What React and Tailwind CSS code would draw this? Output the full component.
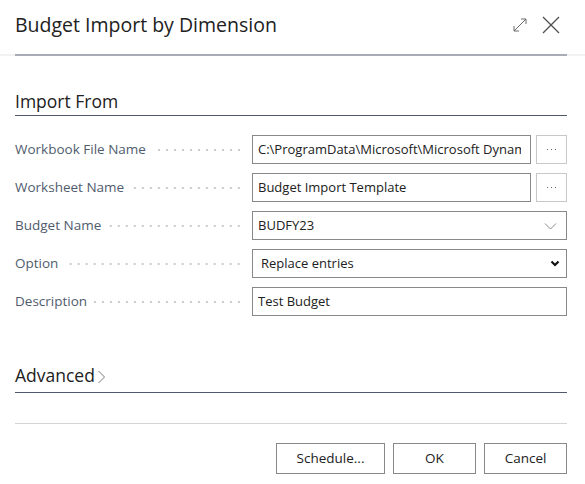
import React from 'react';

const font = { fontFamily: '"Open Sans", "Noto Sans", sans-serif' };

function ExpandIcon() {
  return (
    <svg width="16" height="16" viewBox="0 0 16 16" fill="none" stroke="#6b6b6b" strokeWidth="1">
      <path d="M2 14 14 2" />
      <path d="M9 2h5v5" />
      <path d="M2 9v5h5" />
    </svg>
  );
}

function CloseIcon() {
  return (
    <svg width="18" height="18" viewBox="0 0 18 18" fill="none" stroke="#505050" strokeWidth="1.3">
      <path d="M1 1 17 17M17 1 1 17" />
    </svg>
  );
}

function ThinChevron() {
  return (
    <svg width="13" height="8" viewBox="0 0 13 8" fill="none" stroke="#8a8a8a" strokeWidth="1">
      <path d="M1 1.5 6.5 7 12 1.5" />
    </svg>
  );
}

function BoldChevron() {
  return (
    <svg width="10" height="7" viewBox="0 0 10 7" fill="none" stroke="#111" strokeWidth="2.2">
      <path d="M1.5 1.5 5 5 8.5 1.5" />
    </svg>
  );
}

function Dots() {
  return (
    <span className="flex items-center gap-[2.5px]">
      <span className="h-[1.5px] w-[1.5px] rounded-full bg-[#333]" />
      <span className="h-[1.5px] w-[1.5px] rounded-full bg-[#333]" />
      <span className="h-[1.5px] w-[1.5px] rounded-full bg-[#333]" />
    </span>
  );
}

function Field({ label, children }) {
  return (
    <div className="flex h-[29px] items-center">
      <div className="flex h-full w-[228px] shrink-0 items-center">
        <span className="whitespace-nowrap text-[13.5px] text-[#505c6d]">{label}</span>
        <span className="ml-[6px] h-[2px] flex-1 self-center bg-[radial-gradient(circle,#c6cad1_0.8px,transparent_1px)] bg-[length:8px_2px] bg-right" />
      </div>
      <div className="ml-[9px] flex h-full min-w-0 flex-1 items-center gap-[5px]">{children}</div>
    </div>
  );
}

function Box({ children, right }) {
  return (
    <div className="flex h-full min-w-0 flex-1 items-center border border-[#8a8886] bg-white pl-[5px] pr-[9px]">
      <span className="min-w-0 flex-1 overflow-hidden whitespace-nowrap text-[13px] text-[#212121]">{children}</span>
      {right}
    </div>
  );
}

function EllipsisButton() {
  return (
    <div className="flex h-full w-[31px] shrink-0 items-center justify-center border border-[#c8c8c8]">
      <Dots />
    </div>
  );
}

function Button({ children, w }) {
  return (
    <button
      type="button"
      className={`flex h-[31px] ${w} items-center justify-center border border-[#8a8886] bg-white text-[13.5px] text-[#212121]`}
    >
      {children}
    </button>
  );
}

export default function App() {
  return (
    <div className="h-[484px] w-[585px] overflow-hidden bg-white" style={font}>
      <header className="flex h-[54px] items-start justify-between pl-[15px] pr-[25px]">
        <h1 className="mt-[11px] text-[19.5px] leading-[28px] text-[#212121]">Budget Import by Dimension</h1>
        <div className="mt-[16px] flex items-center gap-[14px]">
          <ExpandIcon />
          <CloseIcon />
        </div>
      </header>
      <div className="h-[2px] bg-[#f2f2f2] pl-[15px] pr-[18px]">
        <div className="h-full bg-[#a9acb6]" />
      </div>

      <div className="pl-[15px] pr-[18px]">
        <div className="mt-[34px] border-b border-[#4f5b6c] pb-[2px]">
          <h2 className="text-[17.5px] leading-[23px] text-[#212121]">Import From</h2>
        </div>

        <div className="mt-[19px] flex flex-col gap-[9px]">
          <Field label="Workbook File Name">
            <Box>C:\ProgramData\Microsoft\Microsoft Dynamics</Box>
            <EllipsisButton />
          </Field>
          <Field label="Worksheet Name">
            <Box>Budget Import Template</Box>
            <EllipsisButton />
          </Field>
          <Field label="Budget Name">
            <Box right={<ThinChevron />}>BUDFY23</Box>
          </Field>
          <Field label="Option">
            <div className="flex h-full flex-1 items-center border border-[#8a8886] bg-white pl-[8px] pr-[6px]">
              <span className="flex-1 text-[13px] text-[#212121]">Replace entries</span>
              <BoldChevron />
            </div>
          </Field>
          <Field label="Description">
            <Box>Test Budget</Box>
          </Field>
        </div>

        <div className="mt-[48px] flex items-center border-b border-[#4f5b6c] pb-[5px]">
          <h2 className="text-[17.5px] leading-[23px] text-[#212121]">Advanced</h2>
          <svg width="9" height="14" viewBox="0 0 9 14" fill="none" stroke="#7a7a7a" strokeWidth="1" className="ml-[2px] mt-[2px]">
            <path d="M1.5 1 7.5 7 1.5 13" />
          </svg>
        </div>

        <div className="mt-[30px] h-px bg-[#d4d4d4]" />

        <div className="mt-[19px] flex justify-end gap-[8px]">
          <Button w="w-[109px]">Schedule...</Button>
          <Button w="w-[83px]">OK</Button>
          <Button w="w-[83px]">Cancel</Button>
        </div>
      </div>
    </div>
  );
}
